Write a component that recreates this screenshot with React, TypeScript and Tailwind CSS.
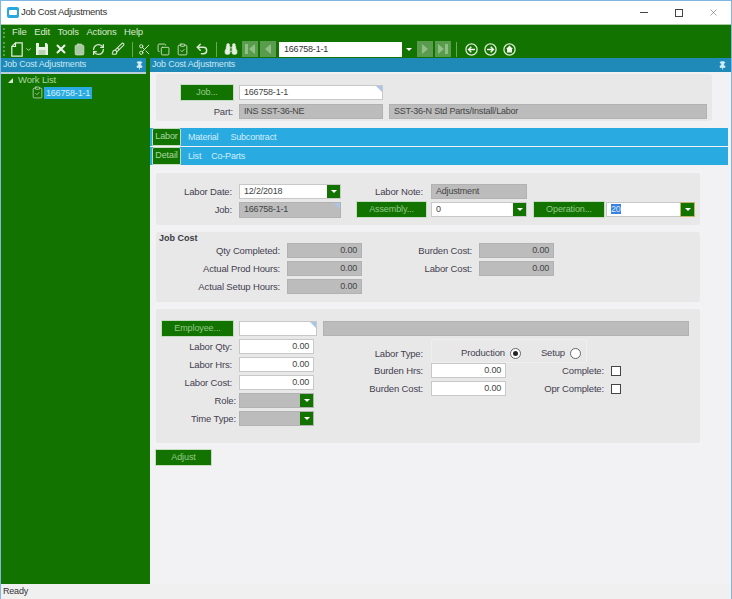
import type { ReactNode } from "react";
import {
  Binoculars,
  Brush,
  ChevronDown,
  Clipboard,
  ClipboardCheck,
  Copy,
  Pin,
  RefreshCw,
  Scissors,
  Undo2,
  X,
} from "lucide-react";

const font = "font-['Liberation_Sans',Arial,sans-serif]";

const Label = ({ w, children }: { w: string; children: ReactNode }) => (
  <div className={`${w} shrink-0 text-right text-[9.5px] leading-[15px] tracking-[-0.15px] text-[#44404f]`}>
    {children}
  </div>
);

const Field = ({
  w,
  value,
  gray,
  right,
  corner,
  h = "h-[15px]",
}: {
  w: string;
  value?: string;
  gray?: boolean;
  right?: boolean;
  corner?: boolean;
  h?: string;
}) => (
  <div
    className={`${w} ${h} relative shrink-0 border px-1 text-[9px] leading-[13px] tracking-[-0.2px] text-[#444] ${
      gray ? "border-[#b2b2b2] bg-[#bcbcbc]" : "border-[#c8c8c8] bg-white"
    } ${right ? "text-right" : ""}`}
  >
    {value}
    {corner && (
      <div className="absolute top-0 right-0 h-0 w-0 border-t-[6px] border-l-[6px] border-t-[#a9c6e8] border-l-transparent" />
    )}
  </div>
);

const Combo = ({
  w,
  value,
  gray,
  selected,
  hot,
}: {
  w: string;
  value?: string;
  gray?: boolean;
  selected?: boolean;
  hot?: boolean;
}) => (
  <div
    className={`${w} flex h-[15px] shrink-0 items-stretch border text-[9px] leading-[13px] tracking-[-0.2px] text-[#444] ${
      gray ? "border-[#b2b2b2] bg-[#bcbcbc]" : "border-[#c8c8c8] bg-white"
    }`}
  >
    <div className="flex-1 px-1">
      {selected ? <span className="bg-[#3b82e0] text-[#d5e6fb]">{value}</span> : value}
    </div>
    <DropButton hot={hot} />
  </div>
);

const DropButton = ({ hot }: { hot?: boolean }) => (
  <div
    className={`flex w-[13px] items-center justify-center bg-[#137300] ${
      hot ? "outline outline-[#bdb76b]" : ""
    }`}
  >
    <div className="h-0 w-0 border-t-[3px] border-r-[3px] border-l-[3px] border-t-white border-r-transparent border-l-transparent" />
  </div>
);

const GreenButton = ({ w, h = "h-[17px]", children }: { w: string; h?: string; children: ReactNode }) => (
  <div
    className={`${w} ${h} flex shrink-0 items-center justify-center border border-[#c4dcc0] bg-[#137300] text-[9px] tracking-[-0.1px] text-[#93c98a]`}
  >
    {children}
  </div>
);

const Grip = ({ h }: { h: string }) => (
  <div className={`${h} w-[2px] shrink-0 border-l-2 border-dotted border-[#5d9f50]`} />
);

const Sep = ({ mr }: { mr: string }) => <div className={`${mr} ml-[5px] h-[15px] w-px shrink-0 bg-[#6aa75d]`} />;

const Slot = ({ children, w = "w-[19px]" }: { children: ReactNode; w?: string }) => (
  <div className={`${w} flex shrink-0 items-center justify-center`}>{children}</div>
);

const NavBox = ({ d, bar }: { d: "l" | "r"; bar?: boolean }) => (
  <div className="flex h-[16px] w-[16px] shrink-0 items-center justify-center bg-[#5a9c4d]">
    <svg width="12" height="12" viewBox="0 0 12 12" fill="#8fbf85">
      {d === "l" ? (
        <>
          {bar && <rect x="1" y="1" width="3" height="10" />}
          <path d={bar ? "M11 1v10L5 6z" : "M9 1v10L3 6z"} />
        </>
      ) : (
        <>
          {bar && <rect x="8" y="1" width="3" height="10" />}
          <path d={bar ? "M1 1v10l6-5z" : "M3 1v10l6-5z"} />
        </>
      )}
    </svg>
  </div>
);

const CircleIcon = ({ kind }: { kind: "back" | "next" | "home" }) => (
  <svg width="13" height="13" viewBox="0 0 13 13">
    <circle cx="6.5" cy="6.5" r="5.6" fill="none" stroke="#dcebd8" strokeWidth="1.3" />
    {kind === "back" && (
      <path d="M10 6.5H3.8M6.3 3.8 3.6 6.5l2.7 2.7" fill="none" stroke="#f2f8f0" strokeWidth="1.5" />
    )}
    {kind === "next" && (
      <path d="M3 6.5h6.2M6.7 3.8l2.7 2.7-2.7 2.7" fill="none" stroke="#f2f8f0" strokeWidth="1.5" />
    )}
    {kind === "home" && <path d="M6.5 2.6 10 6H9v3.6H4V6H3z" fill="#f2f8f0" />}
  </svg>
);

const NewDocIcon = () => (
  <svg width="12" height="15" viewBox="0 0 12 15" fill="none" stroke="#e4efe0" strokeWidth="1.2">
    <path d="M4.5.8h6.7v13.4H.8V4.5z" />
    <path d="M4.5.8v3.7H.8" />
  </svg>
);

const SaveIcon = () => (
  <svg width="12" height="12" viewBox="0 0 12 12">
    <path d="M0 0h10.5L12 1.5V12H0z" fill="#e8f2e4" />
    <rect x="3" y="0" width="6" height="4" fill="#137300" />
    <rect x="2.5" y="7" width="7" height="5" fill="#b9d4b2" />
  </svg>
);

const Radio = ({ on }: { on?: boolean }) => (
  <div className="flex h-[11px] w-[11px] shrink-0 items-center justify-center rounded-full border border-[#666] bg-white">
    {on && <div className="h-[5px] w-[5px] rounded-full bg-[#222]" />}
  </div>
);

const Check = () => <div className="h-[10px] w-[10px] shrink-0 border border-[#444] bg-white" />;

const Tab = ({ active, w, children }: { active?: boolean; w?: string; children: ReactNode }) =>
  active ? (
    <div
      className={`${w} flex h-[18px] items-center justify-center rounded-t-[2px] border border-[#c4dcc0] bg-[#137300] text-[9px] tracking-[-0.1px] text-[#a9d8a0]`}
    >
      {children}
    </div>
  ) : (
    <div className="flex h-[18px] items-center pt-px text-[9px] tracking-[-0.2px] text-[#d2eefa]">{children}</div>
  );

const PaneHeader = ({ title, className }: { title: string; className: string }) => (
  <div className={`${className} flex h-[14px] shrink-0 items-center justify-between bg-[#1f8ab8] pl-[2px] text-[9px] tracking-[-0.2px] text-[#c8e6f2]`}>
    <span>{title}</span>
    <Pin size={9} className="text-[#d8eef6]" fill="#d8eef6" />
  </div>
);

export default function App() {
  return (
    <div className={`${font} flex h-[599px] w-[732px] flex-col overflow-hidden border-x border-t border-[#7fb6e2] bg-white`}>
      {/* title bar */}
      <div className="flex h-[23px] shrink-0 items-center bg-white pl-[6px] text-[#333]">
        <div className="flex h-[11px] w-[12px] items-center justify-center rounded-[2px] bg-[#29a8e0]">
          <div className="h-[5px] w-[8px] rounded-[1px] bg-white" />
        </div>
        <span className="ml-[2px] text-[9.5px] tracking-[-0.3px]">Job Cost Adjustments</span>
        <div className="ml-auto flex items-center">
          <div className="flex w-[35px] justify-center">
            <div className="h-px w-[8px] bg-[#444]" />
          </div>
          <div className="flex w-[35px] justify-center">
            <div className="h-[8px] w-[8px] border border-[#444]" />
          </div>
          <div className="flex w-[35px] justify-center">
            <X size={11} strokeWidth={1} className="text-[#444]" />
          </div>
        </div>
      </div>

      {/* menu and tools */}
      <div className="h-[34px] shrink-0 border-t border-[#a8c8a0] bg-[#137300] pl-[2px] text-[#d8e8d2]">
        <div className="flex h-[15px] items-center">
          <Grip h="h-[10px]" />
          <div className="ml-[7px] flex gap-[7.5px] text-[9.5px] tracking-[-0.15px]">
            <span>File</span>
            <span>Edit</span>
            <span>Tools</span>
            <span>Actions</span>
            <span>Help</span>
          </div>
        </div>
        <div className="flex h-[18px] items-center">
          <Grip h="h-[14px]" />
          <div className="ml-[6px] flex w-[21px] shrink-0 items-center">
            <NewDocIcon />
            <ChevronDown size={7} strokeWidth={3} className="ml-[2px]" />
          </div>
          <Slot>
            <SaveIcon />
          </Slot>
          <Slot>
            <X size={14} strokeWidth={3.4} className="text-[#eef5ec]" />
          </Slot>
          <Slot>
            <Clipboard size={13} fill="#a9c9a2" className="text-[#cfe0ca]" strokeWidth={1.4} />
          </Slot>
          <Slot>
            <RefreshCw size={13} strokeWidth={2.4} />
          </Slot>
          <Slot>
            <Brush size={14} strokeWidth={1.8} />
          </Slot>
          <Sep mr="mr-[2px]" />
          <Slot>
            <Scissors size={13} strokeWidth={1.8} />
          </Slot>
          <Slot>
            <Copy size={13} strokeWidth={1.6} />
          </Slot>
          <Slot>
            <ClipboardCheck size={13} strokeWidth={1.6} />
          </Slot>
          <Slot>
            <Undo2 size={14} strokeWidth={2.5} />
          </Slot>
          <Sep mr="mr-[5px]" />
          <Slot w="w-[17px]">
            <Binoculars size={14} fill="#e8f2e4" strokeWidth={1.4} />
          </Slot>
          <div className="ml-[3px] flex gap-[2px]">
            <NavBox d="l" bar />
            <NavBox d="l" />
          </div>
          <div className="ml-[3px] flex h-[15px] w-[136px] shrink-0 bg-white text-[9px] leading-[15px] tracking-[-0.2px] text-[#333]">
            <div className="flex-1 pl-[5px]">166758-1-1</div>
            <DropButton />
          </div>
          <div className="ml-[2px] flex gap-[2px]">
            <NavBox d="r" />
            <NavBox d="r" bar />
          </div>
          <Sep mr="mr-[5px]" />
          <Slot>
            <CircleIcon kind="back" />
          </Slot>
          <Slot>
            <CircleIcon kind="next" />
          </Slot>
          <Slot>
            <CircleIcon kind="home" />
          </Slot>
        </div>
      </div>

      <div className="flex min-h-0 flex-1 bg-[#137300]">
        {/* work list */}
        <div className="flex w-[145px] shrink-0 flex-col">
          <PaneHeader title="Job Cost Adjustments" className="pr-[2px]" />
          <div className="h-[2px] bg-[#b9cfdc]" />
          <div className="text-[9.5px] tracking-[-0.15px] text-[#a9d8a0]">
            <div className="flex h-[12px] items-center pl-[7px]">
              <div className="h-0 w-0 border-b-[5px] border-l-[5px] border-b-[#d8e8d2] border-l-transparent" />
              <span className="ml-[5px]">Work List</span>
            </div>
            <div className="flex items-center pl-[30px]">
              <ClipboardCheck size={13} strokeWidth={1.3} className="text-[#d8e8d2]" />
              <div className="h-[12px] bg-[#29abe2] px-[2px] text-[9px] leading-[12px] tracking-[-0.2px] text-[#d2eefa]">
                166758-1-1
              </div>
            </div>
          </div>
        </div>

        {/* main pane */}
        <div className="ml-[4px] flex min-w-0 flex-1 flex-col">
          <PaneHeader title="Job Cost Adjustments" className="pr-[4px]" />
          <div className="flex flex-1 flex-col bg-[#f2f2f5]">
            <div className="ml-[6px] mt-[2px] h-[47px] w-[556px] rounded-[3px] bg-[#e8e8e8] pt-[10px]">
              <div className="ml-[24px] flex items-center">
                <GreenButton w="w-[54px]">Job...</GreenButton>
                <div className="ml-[5px]">
                  <Field w="w-[144px]" value="166758-1-1" corner />
                </div>
              </div>
              <div className="mt-[3px] flex items-center">
                <Label w="w-[77px]">Part:</Label>
                <div className="ml-[6px] flex gap-[6px]">
                  <Field w="w-[144px]" value="INS SST-36-NE" gray />
                  <Field w="w-[318px]" value="SST-36-N Std Parts/Install/Labor" gray />
                </div>
              </div>
            </div>

            <div className="mt-[7px] mr-[3px] flex h-[18px] bg-[#29abe2] pl-[2px]">
              <Tab active w="w-[29px]">Labor</Tab>
              <div className="ml-[7px] flex gap-[12px]">
                <Tab>Material</Tab>
                <Tab>Subcontract</Tab>
              </div>
            </div>
            <div className="mt-px mr-[3px] flex h-[18px] bg-[#29abe2] pl-[2px]">
              <Tab active w="w-[29px]">Detail</Tab>
              <div className="ml-[7px] flex gap-[10px]">
                <Tab>List</Tab>
                <Tab>Co-Parts</Tab>
              </div>
            </div>

            <div className="ml-[6px] mt-[8px] h-[52px] w-[544px] rounded-[3px] bg-[#e8e8e8] pt-[11px]">
              <div className="flex items-center">
                <Label w="w-[76px]">Labor Date:</Label>
                <div className="ml-[7px]">
                  <Combo w="w-[102px]" value="12/2/2018" />
                </div>
                <Label w="w-[82px]">Labor Note:</Label>
                <div className="ml-[8px]">
                  <Field w="w-[96px]" value="Adjustment" gray />
                </div>
              </div>
              <div className="mt-[2px] flex items-center">
                <Label w="w-[76px]">Job:</Label>
                <div className="ml-[7px]">
                  <Field w="w-[102px]" value="166758-1-1" gray corner h="h-[16px]" />
                </div>
                <div className="ml-[15px]">
                  <GreenButton w="w-[71px]">Assembly...</GreenButton>
                </div>
                <div className="ml-[4px]">
                  <Combo w="w-[96px]" value="0" />
                </div>
                <div className="ml-[6px]">
                  <GreenButton w="w-[72px]">Operation...</GreenButton>
                </div>
                <div className="ml-px">
                  <Combo w="w-[89px]" value="20" selected hot />
                </div>
              </div>
            </div>

            <div className="ml-[6px] mt-[7px] h-[70px] w-[544px] rounded-[3px] bg-[#e8e8e8]">
              <div className="pt-[1px] pl-[3px] text-[9px] leading-[10px] font-bold text-[#3a3a44]">Job Cost</div>
              <div className="flex items-start">
                <div className="flex flex-col gap-[3px]">
                  {[
                    ["Qty Completed:", "0.00"],
                    ["Actual Prod Hours:", "0.00"],
                    ["Actual Setup Hours:", "0.00"],
                  ].map(([label, value]) => (
                    <div key={label} className="flex items-center">
                      <Label w="w-[124px]">{label}</Label>
                      <div className="ml-[7px]">
                        <Field w="w-[75px]" value={value} gray right />
                      </div>
                    </div>
                  ))}
                </div>
                <div className="flex flex-col gap-[3px]">
                  {[
                    ["Burden Cost:", "0.00"],
                    ["Labor Cost:", "0.00"],
                  ].map(([label, value]) => (
                    <div key={label} className="flex items-center">
                      <Label w="w-[110px]">{label}</Label>
                      <div className="ml-[7px]">
                        <Field w="w-[75px]" value={value} gray right />
                      </div>
                    </div>
                  ))}
                </div>
              </div>
            </div>

            <div className="ml-[6px] mt-[7px] h-[134px] w-[544px] rounded-[3px] bg-[#e8e8e8] pt-[11px]">
              <div className="flex items-center">
                <div className="ml-[5px]">
                  <GreenButton w="w-[73px]">Employee...</GreenButton>
                </div>
                <div className="ml-[5px]">
                  <Field w="w-[78px]" corner />
                </div>
                <div className="ml-[6px]">
                  <Field w="w-[366px]" gray />
                </div>
              </div>
              <div className="mt-[2px] flex">
                <div className="flex w-[158px] shrink-0 flex-col gap-[3px]">
                  {["Labor Qty:", "Labor Hrs:", "Labor Cost:"].map((label) => (
                    <div key={label} className="flex items-center">
                      <Label w="w-[76px]">{label}</Label>
                      <div className="ml-[7px]">
                        <Field w="w-[75px]" value="0.00" right />
                      </div>
                    </div>
                  ))}
                  {["Role:", "Time Type:"].map((label) => (
                    <div key={label} className="flex items-center">
                      <Label w="w-[80px]">{label}</Label>
                      <div className="ml-[3px]">
                        <Combo w="w-[75px]" gray />
                      </div>
                    </div>
                  ))}
                </div>
                <div className="flex flex-col">
                  <div className="flex">
                    <div className="w-[109px] shrink-0 pt-[7px]">
                      <Label w="w-[109px]">Labor Type:</Label>
                    </div>
                    <div className="ml-[8px] flex h-[24px] w-[156px] items-start rounded-[1px] border border-[#efefef] pt-[6px] pl-[29px] text-[9.5px] leading-[13px] tracking-[-0.15px] text-[#44404f]">
                      <span>Production</span>
                      <div className="mt-[2px] ml-[5px]">
                        <Radio on />
                      </div>
                      <span className="ml-[20px]">Setup</span>
                      <div className="mt-[2px] ml-[5px]">
                        <Radio />
                      </div>
                    </div>
                  </div>
                  <div className="flex items-center">
                    <Label w="w-[109px]">Burden Hrs:</Label>
                    <div className="ml-[8px]">
                      <Field w="w-[75px]" value="0.00" right />
                    </div>
                    <Label w="w-[98px]">Complete:</Label>
                    <div className="ml-[7px]">
                      <Check />
                    </div>
                  </div>
                  <div className="mt-[3px] flex items-center">
                    <Label w="w-[109px]">Burden Cost:</Label>
                    <div className="ml-[8px]">
                      <Field w="w-[75px]" value="0.00" right />
                    </div>
                    <Label w="w-[98px]">Opr Complete:</Label>
                    <div className="ml-[7px]">
                      <Check />
                    </div>
                  </div>
                </div>
              </div>
            </div>

            <div className="ml-[5px] mt-[6px]">
              <GreenButton w="w-[57px]">Adjust</GreenButton>
            </div>
          </div>
        </div>
      </div>

      {/* status bar */}
      <div className="flex h-[15px] shrink-0 items-center bg-[#f0f0f0] pl-[2px] text-[9px] tracking-[-0.2px] text-[#333]">Ready</div>
    </div>
  );
}
